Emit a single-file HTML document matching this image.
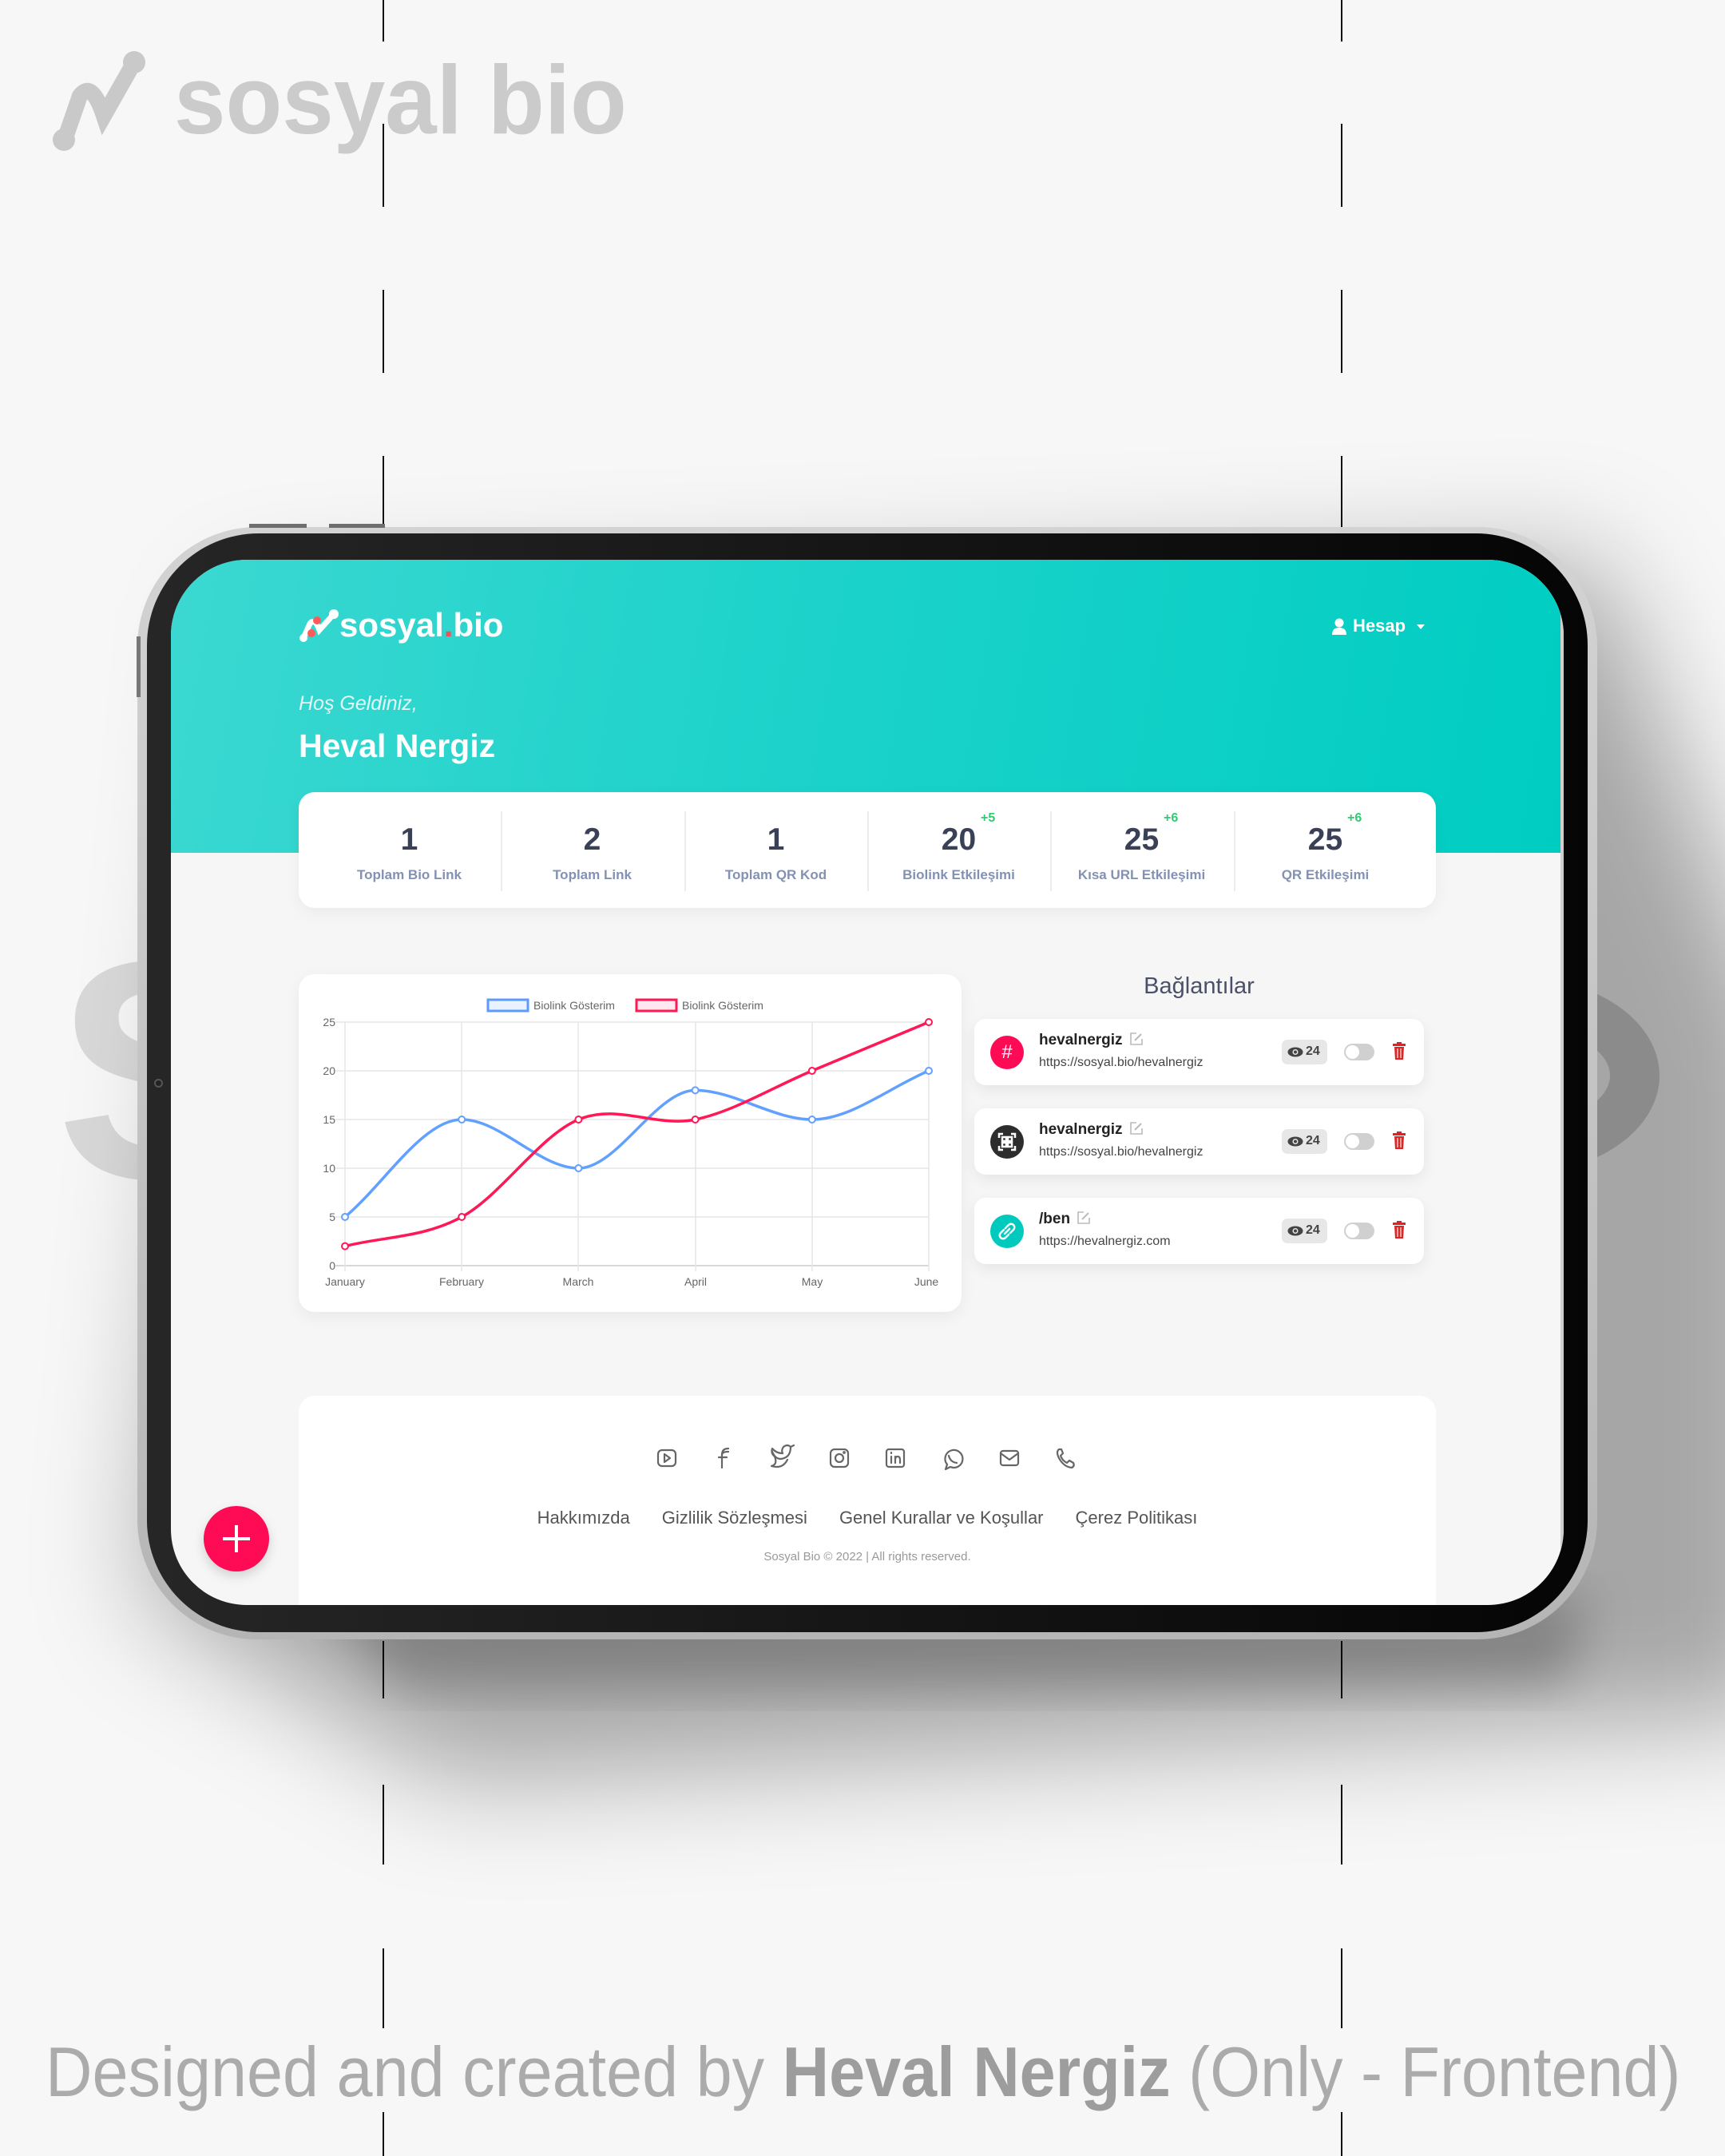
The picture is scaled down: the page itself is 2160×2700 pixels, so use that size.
<!DOCTYPE html>
<html><head><meta charset="utf-8">
<style>
*{margin:0;padding:0;box-sizing:border-box}
html,body{width:2160px;height:2700px;overflow:hidden;background:#f7f7f7;font-family:"Liberation Sans",sans-serif}
.abs{position:absolute}
.dash{position:absolute;width:2px;background:#111}
.scr *{font-family:"Liberation Sans",sans-serif}
.stat{position:absolute;top:0;height:145px;width:229px;text-align:center}
.stat .n{position:absolute;left:0;right:0;top:38px;font-size:39px;font-weight:bold;color:#3a4157}
.stat .l{position:absolute;left:0;right:0;top:94px;font-size:17px;font-weight:bold;color:#8391b3}
.stat sup{position:absolute;top:-14px;font-size:16px;color:#2ecc71;font-weight:bold}
.div{position:absolute;top:24px;width:2px;height:100px;background:#ececec}
.lc{position:absolute;left:1006px;width:563px;height:83px;background:#fff;border-radius:14px;box-shadow:0 6px 18px rgba(0,0,0,0.07)}
.lc .ic{position:absolute;left:20px;top:21px;width:42px;height:42px;border-radius:50%}
.lc .nm{position:absolute;left:81px;top:16px;font-size:19px;font-weight:bold;color:#222}
.lc .ur{position:absolute;left:81px;top:46px;font-size:16px;color:#444}
.lc .eye{position:absolute;left:385px;top:26px;width:57px;height:31px;background:#e7e7e7;border-radius:7px;font-size:16px;font-weight:bold;color:#444;padding:6px 0 0 30px}
.lc .tg{position:absolute;left:463px;top:31px;width:38px;height:21px;background:#d0d0d0;border-radius:11px}
.lc .tg:after{content:"";position:absolute;left:2px;top:2px;width:17px;height:17px;border-radius:50%;background:#fff}
.lc .tr{position:absolute;left:524px;top:29px}
.pen{display:inline-block;vertical-align:-2px;margin-left:8px}
.fl{font-size:22px;color:#555;margin:0 20px}
</style></head><body>

<div class="dash" style="left:479px;top:0;height:52px"></div>
<div class="dash" style="left:479px;top:155px;height:104px"></div>
<div class="dash" style="left:479px;top:363px;height:104px"></div>
<div class="dash" style="left:479px;top:571px;height:90px"></div>
<div class="dash" style="left:1679px;top:0;height:52px"></div>
<div class="dash" style="left:1679px;top:155px;height:104px"></div>
<div class="dash" style="left:1679px;top:363px;height:104px"></div>
<div class="dash" style="left:1679px;top:571px;height:90px"></div>
<div class="dash" style="left:479px;top:2055px;height:72px"></div>
<div class="dash" style="left:479px;top:2235px;height:100px"></div>
<div class="dash" style="left:479px;top:2440px;height:100px"></div>
<div class="dash" style="left:479px;top:2645px;height:55px"></div>
<div class="dash" style="left:1679px;top:2055px;height:72px"></div>
<div class="dash" style="left:1679px;top:2235px;height:100px"></div>
<div class="dash" style="left:1679px;top:2440px;height:100px"></div>
<div class="dash" style="left:1679px;top:2645px;height:55px"></div>

<svg class="abs" style="left:60px;top:60px" width="180" height="140" viewBox="0 0 180 140">
<g stroke="#c9c9c9" stroke-width="20" stroke-linecap="round" fill="none">
<path d="M22 112 L40 60 Q55 40 70 85 L108 18"/>
</g>
<circle cx="20" cy="115" r="14" fill="#c9c9c9"/><circle cx="108" cy="18" r="14" fill="#c9c9c9"/>
</svg>
<div class="abs" style="left:218px;top:40px;font-size:122px;font-weight:bold;color:#cbcbcb;line-height:170px;transform:scaleX(0.95);transform-origin:left">sosyal bio</div>

<div class="abs" style="left:70px;top:1140px;font-size:390px;font-weight:bold;color:#d8d8d8;line-height:400px">S</div>
<div class="abs" style="left:1725px;top:1224px;width:353px;height:246px;border-radius:50%;border:62px solid #d0d0d0"></div>

<svg class="abs" style="left:0;top:0" width="2160" height="2700">
<defs><filter id="b" x="-30%" y="-30%" width="160%" height="160%"><feGaussianBlur stdDeviation="70"/></filter>
<filter id="b2" x="-30%" y="-30%" width="160%" height="160%"><feGaussianBlur stdDeviation="30"/></filter></defs>
<polygon points="300,760 2000,700 2240,1300 2240,2150 560,2230 180,2000" fill="rgba(0,0,0,0.33)" filter="url(#b)"/>
<polygon points="400,2000 1990,2000 1960,2110 500,2110" fill="rgba(0,0,0,0.22)" filter="url(#b2)"/>
</svg>

<div class="abs" style="left:172px;top:660px;width:1828px;height:1393px;border-radius:150px;background:linear-gradient(180deg,#d3d3d3,#b5b5b5)"></div>
<div class="abs" style="left:312px;top:656px;width:72px;height:5px;background:#6e6e6e"></div>
<div class="abs" style="left:412px;top:656px;width:70px;height:5px;background:#6e6e6e"></div>
<div class="abs" style="left:171px;top:797px;width:5px;height:76px;background:#777"></div>
<div class="abs" style="left:184px;top:668px;width:1804px;height:1376px;border-radius:140px;background:linear-gradient(90deg,#262626,#050505)"></div>
<div class="abs" style="left:193px;top:1351px;width:11px;height:11px;border-radius:50%;background:#222;border:2px solid #555"></div>

<div class="abs scr" style="left:214px;top:701px;width:1744px;height:1309px;border-radius:95px;overflow:hidden;background:#f6f6f7">
  <div class="abs" style="left:0;top:0;width:1744px;height:367px;background:linear-gradient(100deg,#3bd8d1 0%,#1fd3cb 40%,#00cdc2 100%)"></div>
  <div class="abs" style="right:0;top:0;width:4px;height:1309px;background:#cfcfcf"></div>

  <svg class="abs" style="left:160px;top:60px" width="54" height="46" viewBox="0 0 54 46">
  <g stroke="#fff" stroke-width="7" stroke-linecap="round" fill="none"><path d="M6 38 L14 20 Q20 12 26 28 L44 8"/></g>
  <circle cx="6" cy="38" r="5" fill="#fff"/><circle cx="44" cy="8" r="6" fill="#fff"/>
  <circle cx="16" cy="32" r="5" fill="#ff5a5a"/><circle cx="23" cy="16" r="5" fill="#ff5a5a"/>
  </svg>
  <div class="abs" style="left:211px;top:54px;font-size:42px;font-weight:bold;color:#fff;line-height:56px">sosyal<span style="color:#ff4b55">.</span>bio</div>

  <svg class="abs" style="left:1453px;top:73px" width="20" height="22" viewBox="0 0 20 22"><circle cx="10" cy="6" r="5.5" fill="#fff"/><path d="M1 21 Q1 12 10 12 Q19 12 19 21 Z" fill="#fff"/></svg>
  <div class="abs" style="left:1480px;top:70px;font-size:22px;font-weight:bold;color:#fff">Hesap</div>
  <div class="abs" style="left:1560px;top:81px;width:0;height:0;border-left:5px solid transparent;border-right:5px solid transparent;border-top:6px solid #fff"></div>

  <div class="abs" style="left:160px;top:166px;font-size:25px;font-style:italic;color:rgba(255,255,255,0.85)">Hoş Geldiniz,</div>
  <div class="abs" style="left:160px;top:210px;font-size:41px;font-weight:bold;color:#fff">Heval Nergiz</div>

  <div class="abs" style="left:160px;top:291px;width:1424px;height:145px;background:#fff;border-radius:20px;box-shadow:0 6px 20px rgba(0,0,0,0.05)">
    <div class="stat" style="left:24px"><div class="n">1</div><div class="l">Toplam Bio Link</div></div>
    <div class="div" style="left:253px"></div>
    <div class="stat" style="left:253px"><div class="n">2</div><div class="l">Toplam Link</div></div>
    <div class="div" style="left:483px"></div>
    <div class="stat" style="left:483px"><div class="n">1</div><div class="l">Toplam QR Kod</div></div>
    <div class="div" style="left:712px"></div>
    <div class="stat" style="left:712px"><div class="n">20<sup style="left:142px">+5</sup></div><div class="l">Biolink Etkileşimi</div></div>
    <div class="div" style="left:941px"></div>
    <div class="stat" style="left:941px"><div class="n">25<sup style="left:142px">+6</sup></div><div class="l">Kısa URL Etkileşimi</div></div>
    <div class="div" style="left:1171px"></div>
    <div class="stat" style="left:1171px"><div class="n">25<sup style="left:142px">+6</sup></div><div class="l">QR Etkileşimi</div></div>
  </div>

  <div class="abs" style="left:160px;top:519px;width:830px;height:423px;background:#fff;border-radius:20px;box-shadow:0 6px 20px rgba(0,0,0,0.06)">
    <svg width="830" height="423" viewBox="374 1220 830 423">
      <g stroke="#e6e6e6" stroke-width="1.5">
        <line x1="420" y1="1280" x2="1163" y2="1280"/><line x1="420" y1="1341" x2="1163" y2="1341"/>
        <line x1="420" y1="1402" x2="1163" y2="1402"/><line x1="420" y1="1463" x2="1163" y2="1463"/>
        <line x1="420" y1="1524" x2="1163" y2="1524"/><line x1="420" y1="1585" x2="1163" y2="1585" stroke="#ccc"/>
        <line x1="432" y1="1280" x2="432" y2="1592"/><line x1="578" y1="1280" x2="578" y2="1592"/>
        <line x1="724" y1="1280" x2="724" y2="1592"/><line x1="871" y1="1280" x2="871" y2="1592"/>
        <line x1="1017" y1="1280" x2="1017" y2="1592"/><line x1="1163" y1="1280" x2="1163" y2="1592"/>
      </g>
      <g font-family="Liberation Sans" font-size="14" fill="#666" text-anchor="end">
        <text x="420" y="1285">25</text><text x="420" y="1346">20</text><text x="420" y="1407">15</text>
        <text x="420" y="1468">10</text><text x="420" y="1529">5</text><text x="420" y="1590">0</text>
      </g>
      <g font-family="Liberation Sans" font-size="14" fill="#666" text-anchor="middle">
        <text x="432" y="1610">January</text><text x="578" y="1610">February</text><text x="724" y="1610">March</text>
        <text x="871" y="1610">April</text><text x="1017" y="1610">May</text><text x="1160" y="1610">June</text>
      </g>
      <rect x="611" y="1252" width="50" height="14" fill="#eaf2ff" stroke="#5b9bff" stroke-width="3"/>
      <text x="668" y="1264" font-family="Liberation Sans" font-size="14" fill="#666">Biolink Gösterim</text>
      <rect x="797" y="1252" width="50" height="14" fill="#ffe8ee" stroke="#ff1756" stroke-width="3"/>
      <text x="854" y="1264" font-family="Liberation Sans" font-size="14" fill="#666">Biolink Gösterim</text>
      <path d="M432,1524 C480.7,1483.4 529.5,1402 578.2,1402 C626.9,1402 675.7,1463 724.4,1463 C773.1,1463 821.9,1365.4 870.6,1365.4 C919.3,1365.4 968.1,1402 1016.8,1402 C1065.5,1402 1114.3,1361.3 1163,1341" fill="none" stroke="#62a0ff" stroke-width="3.5"/>
      <path d="M432,1560.6 C480.7,1548.4 529.5,1550.4 578.2,1524 C626.9,1497.6 675.7,1422.3 724.4,1402 C773.1,1381.7 821.9,1412.2 870.6,1402 C919.3,1391.8 968.1,1361.3 1016.8,1341 C1065.5,1320.7 1114.3,1300.3 1163,1280" fill="none" stroke="#ff1756" stroke-width="3.5"/>
      <g fill="#fff" stroke="#62a0ff" stroke-width="2">
        <circle cx="432" cy="1524" r="4"/><circle cx="578.2" cy="1402" r="4"/><circle cx="724.4" cy="1463" r="4"/><circle cx="870.6" cy="1365.4" r="4"/><circle cx="1016.8" cy="1402" r="4"/><circle cx="1163" cy="1341" r="4"/>
      </g>
      <g fill="#fff" stroke="#ff1756" stroke-width="2">
        <circle cx="432" cy="1560.6" r="4"/><circle cx="578.2" cy="1524" r="4"/><circle cx="724.4" cy="1402" r="4"/><circle cx="870.6" cy="1402" r="4"/><circle cx="1016.8" cy="1341" r="4"/><circle cx="1163" cy="1280" r="4"/>
      </g>
    </svg>
  </div>

  <div class="abs" style="left:1006px;width:563px;top:518px;text-align:center;font-size:29px;color:#4a5068">Bağlantılar</div>

  <div class="lc" style="top:575px">
    <div class="ic" style="background:#ff0b55;color:#fff;font-size:24px;text-align:center;line-height:42px">#</div>
    <div class="nm">hevalnergiz<svg class="pen" width="18" height="18" viewBox="0 0 18 18"><path d="M9 2H2V16H16V9" fill="none" stroke="#bbb" stroke-width="1.6"/><path d="M7 11L15 3" stroke="#bbb" stroke-width="2"/></svg></div>
    <div class="ur">https://sosyal.bio/hevalnergiz</div>
    <div class="eye"><svg class="abs" style="left:7px;top:9px" width="20" height="13" viewBox="0 0 20 13"><ellipse cx="10" cy="6.5" rx="9.5" ry="6" fill="#444"/><circle cx="10" cy="6.5" r="3.5" fill="#e7e7e7"/><circle cx="10" cy="6.5" r="2" fill="#444"/></svg>24</div>
    <div class="tg"></div>
    <svg class="tr" width="16" height="22" viewBox="0 0 16 22"><rect x="0" y="2" width="16" height="3" fill="#e02424"/><rect x="5" y="0" width="6" height="3" fill="#e02424"/><path d="M2 6 H14 L13 22 H3 Z" fill="#e02424"/><path d="M6 8V20M10 8V20" stroke="#fff" stroke-width="1.2"/></svg>
  </div>
  <div class="lc" style="top:687px">
    <div class="ic" style="background:#2d2d2d"><svg width="42" height="42" viewBox="0 0 42 42"><g stroke="#fff" stroke-width="2.5" fill="none"><path d="M11 16V11H16M26 11H31V16M31 26V31H26M16 31H11V26"/><rect x="15" y="15" width="5" height="5"/><rect x="22" y="15" width="5" height="5"/><rect x="15" y="22" width="5" height="5"/><rect x="22" y="22" width="5" height="5"/></g></svg></div>
    <div class="nm">hevalnergiz<svg class="pen" width="18" height="18" viewBox="0 0 18 18"><path d="M9 2H2V16H16V9" fill="none" stroke="#bbb" stroke-width="1.6"/><path d="M7 11L15 3" stroke="#bbb" stroke-width="2"/></svg></div>
    <div class="ur">https://sosyal.bio/hevalnergiz</div>
    <div class="eye"><svg class="abs" style="left:7px;top:9px" width="20" height="13" viewBox="0 0 20 13"><ellipse cx="10" cy="6.5" rx="9.5" ry="6" fill="#444"/><circle cx="10" cy="6.5" r="3.5" fill="#e7e7e7"/><circle cx="10" cy="6.5" r="2" fill="#444"/></svg>24</div>
    <div class="tg"></div>
    <svg class="tr" width="16" height="22" viewBox="0 0 16 22"><rect x="0" y="2" width="16" height="3" fill="#e02424"/><rect x="5" y="0" width="6" height="3" fill="#e02424"/><path d="M2 6 H14 L13 22 H3 Z" fill="#e02424"/><path d="M6 8V20M10 8V20" stroke="#fff" stroke-width="1.2"/></svg>
  </div>
  <div class="lc" style="top:799px">
    <div class="ic" style="background:#00c9bd"><svg width="42" height="42" viewBox="0 0 42 42"><g stroke="#fff" stroke-width="2.5" fill="none" stroke-linecap="round"><path d="M19 17 L23 13 A4 4 0 0 1 29 19 L25 23"/><path d="M23 25 L19 29 A4 4 0 0 1 13 23 L17 19"/><path d="M18 24 L24 18"/></g></svg></div>
    <div class="nm">/ben<svg class="pen" width="18" height="18" viewBox="0 0 18 18"><path d="M9 2H2V16H16V9" fill="none" stroke="#bbb" stroke-width="1.6"/><path d="M7 11L15 3" stroke="#bbb" stroke-width="2"/></svg></div>
    <div class="ur">https://hevalnergiz.com</div>
    <div class="eye"><svg class="abs" style="left:7px;top:9px" width="20" height="13" viewBox="0 0 20 13"><ellipse cx="10" cy="6.5" rx="9.5" ry="6" fill="#444"/><circle cx="10" cy="6.5" r="3.5" fill="#e7e7e7"/><circle cx="10" cy="6.5" r="2" fill="#444"/></svg>24</div>
    <div class="tg"></div>
    <svg class="tr" width="16" height="22" viewBox="0 0 16 22"><rect x="0" y="2" width="16" height="3" fill="#e02424"/><rect x="5" y="0" width="6" height="3" fill="#e02424"/><path d="M2 6 H14 L13 22 H3 Z" fill="#e02424"/><path d="M6 8V20M10 8V20" stroke="#fff" stroke-width="1.2"/></svg>
  </div>

  <div class="abs" style="left:160px;top:1047px;width:1424px;height:320px;background:#fff;border-radius:20px">
    <svg class="abs" style="left:0;top:0" width="1424" height="160" viewBox="374 1748 1424 160">
      <g stroke="#666" stroke-width="2.2" fill="none" stroke-linecap="round" stroke-linejoin="round">
        <rect x="824" y="1816" width="22" height="20" rx="5"/><path d="M832 1821 L839 1826 L832 1831 Z"/>
        <path d="M912 1814 Q904 1814 904 1822 V1838 M900 1825 H910"/><path d="M904 1822 Q904 1818 912 1818"/>
        <path d="M967 1818 Q972 1830 982 1826 Q990 1823 990 1812 L994 1810 L990 1812 Q986 1808 981 1812 Q978 1816 980 1820 Q972 1820 967 1814 Q965 1820 970 1824 Q974 1834 966 1836 Q980 1840 986 1828"/>
        <rect x="1040" y="1815" width="22" height="22" rx="5"/><circle cx="1051" cy="1826" r="5"/><circle cx="1057" cy="1819" r="0.8"/>
        <rect x="1110" y="1815" width="22" height="22" rx="3"/><path d="M1116 1824 V1832 M1116 1819 V1820 M1121 1832 V1824 M1121 1828 Q1121 1824 1124 1824 Q1127 1824 1127 1828 V1832"/>
        <path d="M1184 1840 L1186 1834 A11 11 0 1 1 1190 1837 Z"/><path d="M1188 1823 Q1190 1831 1198 1832"/>
        <rect x="1253" y="1817" width="22" height="18" rx="3"/><path d="M1253 1820 L1264 1828 L1275 1820"/>
        <path d="M1326 1815 Q1322 1818 1326 1826 Q1332 1837 1342 1838 Q1346 1836 1344 1832 L1339 1829 L1336 1832 Q1330 1829 1328 1823 L1331 1820 L1329 1815 Z"/>
      </g>
    </svg>
    <div class="abs" style="left:0;right:0;top:140px;text-align:center;white-space:nowrap"><span class="fl">Hakkımızda</span><span class="fl">Gizlilik Sözleşmesi</span><span class="fl">Genel Kurallar ve Koşullar</span><span class="fl">Çerez Politikası</span></div>
    <div class="abs" style="left:0;right:0;top:193px;text-align:center;font-size:15px;color:#999">Sosyal Bio © 2022 | All rights reserved.</div>
  </div>

  <div class="abs" style="left:41px;top:1185px;width:82px;height:82px;border-radius:50%;background:#ff0b55;box-shadow:0 6px 14px rgba(0,0,0,0.15)">
    <div class="abs" style="left:24px;top:39px;width:34px;height:4px;background:#fff"></div>
    <div class="abs" style="left:39px;top:24px;width:4px;height:34px;background:#fff"></div>
  </div>
</div>

<div class="abs" style="left:57px;top:2545px;font-size:88px;line-height:100px;color:#ababab;white-space:nowrap;transform:scaleX(0.92);transform-origin:left">Designed and created by <b style="color:#9d9d9d">Heval Nergiz</b> (Only - Frontend)</div>

</body></html>
